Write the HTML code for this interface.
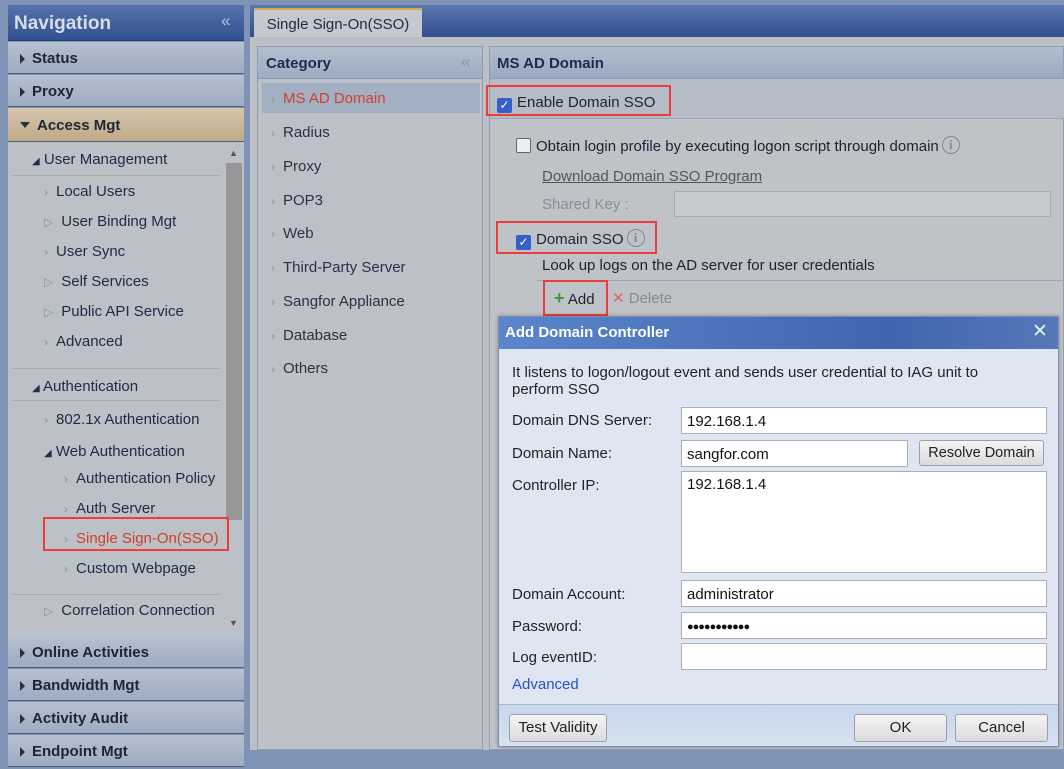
<!DOCTYPE html>
<html><head><meta charset="utf-8"><style>
*{margin:0;padding:0;box-sizing:border-box}
body{width:1064px;height:750px;overflow:hidden;background:#7f93b4;font-family:"Liberation Sans",sans-serif;font-size:15px;color:#1d2233;position:relative}
.a{position:absolute}
.sec{position:absolute;left:8px;width:236px;height:32px;background:linear-gradient(#b6c1d0,#9eacc1);border-bottom:1px solid #4e5f7c;font-weight:bold;font-size:15px;line-height:34px;padding-left:12px;color:#1e2535}
.tri{display:inline-block;width:0;height:0;border-left:5px solid #2a3040;border-top:5px solid transparent;border-bottom:5px solid transparent;margin-right:7px;vertical-align:-1px}
.sub{position:absolute;font-size:15px;color:#222a45}
.ar{color:#8a92a0;font-size:12px;margin-right:8px}
.cat{position:absolute;left:271px;font-size:15px;color:#2a3045}
.inp{position:absolute;background:#fff;border:1px solid #a6b0c0;font-size:15px;padding-left:5px;line-height:28px;color:#111}
.lbl{position:absolute;left:512px;font-size:15px;color:#222}
.btn{position:absolute;background:linear-gradient(#f4f4f4,#dcdcdc);border:1px solid #9aa0aa;border-radius:3px;font-size:15px;text-align:center;color:#222}
.red{position:absolute;border:2px solid #ee3b3b}
.cb{display:inline-block;width:15px;height:15px;border-radius:2px;background:#3660c8;color:#fff;font-size:12px;line-height:15px;text-align:center;vertical-align:-2px;margin-right:5px}
.info{display:inline-block;width:18px;height:18px;border:1.5px solid #7d8aa0;border-radius:50%;color:#7d8aa0;font-size:13px;line-height:15px;text-align:center;font-weight:bold;vertical-align:middle;margin-left:3px;margin-top:-4px;font-family:"Liberation Serif",serif}
</style></head><body>
<div class="a" style="left:8px;top:5px;width:236px;height:36px;background:linear-gradient(#5574aa,#31508f);border-bottom:1px solid #2b3f6a"></div>
<div class="a" style="left:14px;top:13px;font-size:19px;font-weight:bold;color:#d6deec">Navigation</div>
<div class="a" style="left:221px;top:11px;font-size:17px;color:#b5c3dc">«</div>
<div class="sec" style="top:42px"><span class="tri"></span>Status</div>
<div class="sec" style="top:75px"><span class="tri"></span>Proxy</div>
<div class="sec" style="top:108px;height:34px;line-height:36px;background:linear-gradient(#d4c5ae,#c0aa88)"><span class="tri" style="border-left:5px solid transparent;border-right:5px solid transparent;border-top:6px solid #2a3040;border-bottom:0;vertical-align:2px"></span>Access Mgt</div>
<div class="a" style="left:8px;top:142px;width:236px;height:494px;background:#bcc0c7"></div>
<div class="a" style="left:226px;top:163px;width:16px;height:357px;background:#979797"></div>
<div class="a" style="left:229px;top:148px;font-size:9px;color:#555">▲</div>
<div class="a" style="left:229px;top:618px;font-size:9px;color:#555">▼</div>
<div class="a" style="left:12px;top:175px;width:208px;border-top:1px solid #a8adb6"></div>
<div class="a" style="left:12px;top:368px;width:208px;border-top:1px solid #a8adb6"></div>
<div class="a" style="left:12px;top:400px;width:208px;border-top:1px solid #a8adb6"></div>
<div class="a" style="left:12px;top:594px;width:208px;border-top:1px solid #a8adb6"></div>
<div class="sub" style="left:32px;top:151px"><span style="font-size:10px">◢</span> User Management</div>
<div class="sub" style="left:44px;top:183px"><span class="ar">›</span>Local Users</div>
<div class="sub" style="left:44px;top:213px"><span class="ar">▷</span>User Binding Mgt</div>
<div class="sub" style="left:44px;top:243px"><span class="ar">›</span>User Sync</div>
<div class="sub" style="left:44px;top:273px"><span class="ar">▷</span>Self Services</div>
<div class="sub" style="left:44px;top:303px"><span class="ar">▷</span>Public API Service</div>
<div class="sub" style="left:44px;top:333px"><span class="ar">›</span>Advanced</div>
<div class="sub" style="left:32px;top:378px"><span style="font-size:10px">◢</span> Authentication</div>
<div class="sub" style="left:44px;top:411px"><span class="ar">›</span>802.1x Authentication</div>
<div class="sub" style="left:44px;top:443px"><span style="font-size:10px">◢</span> Web Authentication</div>
<div class="sub" style="left:64px;top:470px"><span class="ar">›</span>Authentication Policy</div>
<div class="sub" style="left:64px;top:500px"><span class="ar">›</span>Auth Server</div>
<div class="sub" style="left:64px;top:530px;color:#d0402a"><span class="ar">›</span>Single Sign-On(SSO)</div>
<div class="red" style="left:43px;top:517px;width:186px;height:34px"></div>
<div class="sub" style="left:64px;top:560px"><span class="ar">›</span>Custom Webpage</div>
<div class="sub" style="left:44px;top:602px"><span class="ar">▷</span>Correlation Connection</div>
<div class="sec" style="top:636px"><span class="tri"></span>Online Activities</div>
<div class="sec" style="top:669px"><span class="tri"></span>Bandwidth Mgt</div>
<div class="sec" style="top:702px"><span class="tri"></span>Activity Audit</div>
<div class="sec" style="top:735px"><span class="tri"></span>Endpoint Mgt</div>
<div class="a" style="left:250px;top:5px;width:814px;height:32px;background:linear-gradient(#5878ae,#324f90)"></div>
<div class="a" style="left:254px;top:8px;width:168px;height:29px;background:#c4c8cf;border-top:2px solid #d9a84a;font-size:15px;line-height:29px;text-align:center;color:#222a45">Single Sign-On(SSO)</div>
<div class="a" style="left:250px;top:37px;width:814px;height:713px;background:#bcc0c6"></div>
<div class="a" style="left:257px;top:46px;width:226px;height:704px;background:#bdc1c7;border:1px solid #8f9db3"></div>
<div class="a" style="left:257px;top:46px;width:226px;height:33px;background:linear-gradient(#b3bece,#9dadc4);border:1px solid #8f9db3;font-weight:bold;font-size:15px;line-height:33px;padding-left:8px;color:#1e2a4a">Category</div>
<div class="a" style="left:461px;top:52px;color:#8896ad;font-size:17px">«</div>
<div class="a" style="left:262px;top:83px;width:218px;height:30px;background:#a3afc2"></div>
<div class="cat" style="top:90px;color:#d3402e"><span class="ar">›</span>MS AD Domain</div>
<div class="cat" style="top:124px"><span class="ar">›</span>Radius</div>
<div class="cat" style="top:158px"><span class="ar">›</span>Proxy</div>
<div class="cat" style="top:192px"><span class="ar">›</span>POP3</div>
<div class="cat" style="top:225px"><span class="ar">›</span>Web</div>
<div class="cat" style="top:259px"><span class="ar">›</span>Third-Party Server</div>
<div class="cat" style="top:293px"><span class="ar">›</span>Sangfor Appliance</div>
<div class="cat" style="top:327px"><span class="ar">›</span>Database</div>
<div class="cat" style="top:360px"><span class="ar">›</span>Others</div>
<div class="a" style="left:489px;top:46px;width:575px;height:704px;background:#bfc2c7;border:1px solid #8f9db3"></div>
<div class="a" style="left:489px;top:46px;width:575px;height:33px;background:linear-gradient(#b3bece,#99a9c2);border:1px solid #8f9db3;font-weight:bold;font-size:15px;line-height:33px;padding-left:7px;color:#1e2a4a">MS AD Domain</div>
<div class="a" style="left:490px;top:79px;width:574px;height:40px;background:#b5bcc6;border-bottom:1px solid #9aa6b8"></div>
<div class="a" style="left:497px;top:94px;font-size:15px"><span class="cb">✓</span>Enable Domain SSO</div>
<div class="red" style="left:486px;top:85px;width:185px;height:31px"></div>
<div class="a" style="left:516px;top:138px;font-size:15px"><span class="cb" style="background:#eee;border:1px solid #666"></span>Obtain login profile by executing logon script through domain<span class="info">i</span></div>
<div class="a" style="left:542px;top:168px;font-size:15px;color:#555;text-decoration:underline">Download Domain SSO Program</div>
<div class="a" style="left:542px;top:196px;font-size:15px;color:#8a8e95">Shared Key :</div>
<div class="a" style="left:674px;top:191px;width:377px;height:26px;border:1px solid #a7abb2;background:#c6c9ce"></div>
<div class="a" style="left:516px;top:231px;font-size:15px"><span class="cb">✓</span>Domain SSO<span class="info">i</span></div>
<div class="red" style="left:496px;top:221px;width:161px;height:33px"></div>
<div class="a" style="left:542px;top:257px;font-size:15px">Look up logs on the AD server for user credentials</div>
<div class="a" style="left:537px;top:280px;width:527px;border-top:1px solid #9aa6b8"></div>
<div class="a" style="left:554px;top:288px;font-size:15px"><span style="color:#3e9a3e;font-weight:bold;font-size:18px">+</span> Add</div>
<div class="red" style="left:543px;top:280px;width:65px;height:36px"></div>
<div class="a" style="left:612px;top:289px;font-size:15px;color:#888"><span style="color:#d66">✕</span> Delete</div>
<div class="a" style="left:498px;top:316px;width:561px;height:431px;background:#dfe6f2;border:1px solid #7c8fb3;box-shadow:0 0 4px rgba(0,0,0,.3)"></div>
<div class="a" style="left:499px;top:317px;width:559px;height:32px;background:linear-gradient(90deg,#5b86cc,#3f66ad 70%,#5578b8);color:#fff;font-weight:bold;font-size:15px;line-height:31px;padding-left:6px">Add Domain Controller</div>
<div class="a" style="left:1032px;top:320px;color:#e4ebf5;font-size:19px">✕</div>
<div class="a" style="left:512px;top:364px;font-size:15px;line-height:17px;width:505px;color:#222">It listens to logon/logout event and sends user credential to IAG unit to perform SSO</div>
<div class="lbl" style="top:412px">Domain DNS Server:</div>
<div class="inp" style="left:681px;top:407px;width:366px;height:27px">192.168.1.4</div>
<div class="lbl" style="top:445px">Domain Name:</div>
<div class="inp" style="left:681px;top:440px;width:227px;height:27px">sangfor.com</div>
<div class="btn" style="left:919px;top:440px;width:125px;height:26px;line-height:24px;font-size:14.5px">Resolve Domain</div>
<div class="lbl" style="top:477px">Controller IP:</div>
<div class="inp" style="left:681px;top:471px;width:366px;height:102px;line-height:26px">192.168.1.4</div>
<div class="lbl" style="top:586px">Domain Account:</div>
<div class="inp" style="left:681px;top:580px;width:366px;height:27px">administrator</div>
<div class="lbl" style="top:618px">Password:</div>
<div class="inp" style="left:681px;top:612px;width:366px;height:27px;font-size:11px;letter-spacing:-1px">●●●●●●●●●●●</div>
<div class="lbl" style="top:649px">Log eventID:</div>
<div class="inp" style="left:681px;top:643px;width:366px;height:27px"></div>
<div class="lbl" style="top:676px;color:#2a4fc6">Advanced</div>
<div class="a" style="left:499px;top:704px;width:559px;height:42px;background:linear-gradient(#c8d6ea,#d6e2f2);border-top:1px solid #a8b8d2"></div>
<div class="btn" style="left:509px;top:714px;width:98px;height:28px;line-height:26px">Test Validity</div>
<div class="btn" style="left:854px;top:714px;width:93px;height:28px;line-height:26px">OK</div>
<div class="btn" style="left:955px;top:714px;width:93px;height:28px;line-height:26px">Cancel</div>
</body></html>
